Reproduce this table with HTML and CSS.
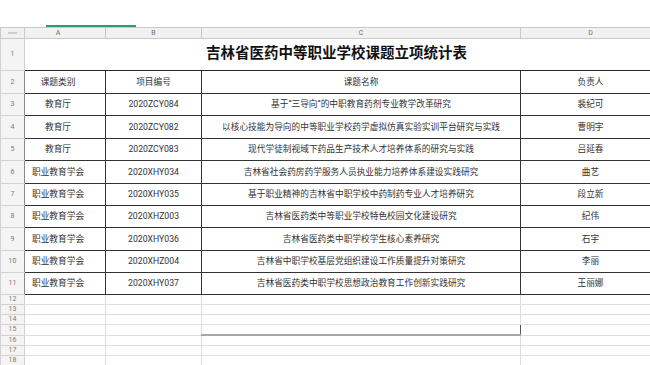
FILE: index.html
```html
<!DOCTYPE html>
<html lang="zh">
<head>
<meta charset="utf-8">
<title>吉林省医药中等职业学校课题立项统计表</title>
<link rel="stylesheet" href="styles.css">
</head>
<body>
<div class="topbar"><div class="tab-line"></div></div>
<div class="sheet">
<table class="grid">
<colgroup><col class="c-rn"><col class="c-a"><col class="c-b"><col class="c-c"><col class="c-d"></colgroup>
<thead>
<tr class="h-col"><th class="corner"><span class="corner-mark"></span></th><th class="col-a">A</th><th>B</th><th>C</th><th>D</th></tr>
</thead>
<tbody>
<tr class="r-title"><th class="rn">1</th><td colspan="4" class="title">吉林省医药中等职业学校课题立项统计表</td></tr>
<tr class="r-data h23"><th class="rn">2</th><td class="ca">课题类别</td><td>项目编号</td><td>课题名称</td><td>负责人</td></tr>
<tr class="r-data h22"><th class="rn">3</th><td class="ca">教育厅</td><td>2020ZCY084</td><td>基于“三导向”的中职教育药剂专业教学改革研究</td><td>裴纪可</td></tr>
<tr class="r-data h23"><th class="rn">4</th><td class="ca">教育厅</td><td>2020ZCY082</td><td>以核心技能为导向的中等职业学校药学虚拟仿真实验实训平台研究与实践</td><td>曹明宇</td></tr>
<tr class="r-data h22"><th class="rn">5</th><td class="ca">教育厅</td><td>2020ZCY083</td><td>现代学徒制视域下药品生产技术人才培养体系的研究与实践</td><td>吕延春</td></tr>
<tr class="r-data h23"><th class="rn">6</th><td class="ca">职业教育学会</td><td>2020XHY034</td><td>吉林省社会药房药学服务人员执业能力培养体系建设实践研究</td><td>曲艺</td></tr>
<tr class="r-data h22"><th class="rn">7</th><td class="ca">职业教育学会</td><td>2020XHY035</td><td>基于职业精神的吉林省中职学校中药制药专业人才培养研究</td><td>段立新</td></tr>
<tr class="r-data h22"><th class="rn">8</th><td class="ca">职业教育学会</td><td>2020XHZ003</td><td>吉林省医药类中等职业学校特色校园文化建设研究</td><td>纪伟</td></tr>
<tr class="r-data h23"><th class="rn">9</th><td class="ca">职业教育学会</td><td>2020XHY036</td><td>吉林省医药类中职学校学生核心素养研究</td><td>石宇</td></tr>
<tr class="r-data h22"><th class="rn">10</th><td class="ca">职业教育学会</td><td>2020XHZ004</td><td>吉林省中职学校基层党组织建设工作质量提升对策研究</td><td>李丽</td></tr>
<tr class="r-data h22"><th class="rn">11</th><td class="ca">职业教育学会</td><td>2020XHY037</td><td>吉林省医药类中职学校思想政治教育工作创新实践研究</td><td>王丽娜</td></tr>
<tr class="r-empty"><th class="rn">12</th><td></td><td></td><td></td><td></td></tr>
<tr class="r-empty"><th class="rn">13</th><td></td><td></td><td></td><td></td></tr>
<tr class="r-empty"><th class="rn">14</th><td></td><td></td><td></td><td></td></tr>
<tr class="r-empty"><th class="rn">15</th><td></td><td></td><td class="sel"></td><td></td></tr>
<tr class="r-empty"><th class="rn">16</th><td></td><td></td><td></td><td></td></tr>
<tr class="r-empty"><th class="rn">17</th><td></td><td></td><td></td><td></td></tr>
<tr class="r-empty"><th class="rn">18</th><td></td><td></td><td></td><td></td></tr>
</tbody>
</table>
</div>
</body>
</html>
```
FILE: styles.css
```css
html, body {
  margin: 0;
  padding: 0;
  background: #ffffff;
  overflow: hidden;
}
body {
  font-family: Roboto, "Noto Sans CJK SC", sans-serif;
  width: 650px;
  height: 365px;
}
.topbar {
  height: 27px;
  display: flex;
  align-items: flex-end;
  padding-left: 46px;
  box-sizing: border-box;
}
.tab-line {
  width: 90px;
  height: 2px;
  background: #22a06d;
}
.sheet {
  width: 650px;
  overflow: hidden;
}
.grid {
  border-collapse: collapse;
  table-layout: fixed;
  width: 660px;
}
.c-rn { width: 24px; }
.c-a { width: 81px; }
.c-b { width: 96px; }
.c-c { width: 319px; }
.c-d { width: 140px; }

.grid th, .grid td {
  padding: 0;
  border: 1px solid #e0e0e0;
  font-weight: normal;
  white-space: nowrap;
  overflow: hidden;
  line-height: 1;
  text-align: center;
  vertical-align: middle;
}
.h-col th {
  height: 10px;
  background: #f1f1f1;
  color: #707070;
  font-size: 7px;
  border-color: #c9c9c9;
}
.h-col th.col-a {
  padding-right: 14px;
}
.corner-mark {
  display: inline-block;
  width: 9px;
  height: 2px;
  background: #cdcdcd;
  vertical-align: middle;
}
.grid th.rn {
  background: #f4f4f4;
  color: #7a7a7a;
  font-size: 7px;
  border-color: #d2d2d2;
}
.r-title td {
  height: 31px;
  font-size: 14.5px;
  font-weight: 700;
  color: #111111;
  padding-right: 12px;
  border-bottom-color: #2a2a2a;
}
.r-data td {
  border: 1px solid #333333;
  font-size: 8.7px;
  color: #333333;
}
.r-data td.ca {
  padding-right: 14px;
}
.r-data th.rn {
  border-right-color: #8a8a8a;
}
.h23 td { height: 22px; }
.h22 td { height: 21px; }
.r-empty td, .r-empty th {
  height: 9px;
}
.r-empty td {
  border-color: #dedede;
}
.r-empty td.sel {
  border: 1px solid #555555;
  border-bottom: 2px solid #a5a5a5;
}
```
